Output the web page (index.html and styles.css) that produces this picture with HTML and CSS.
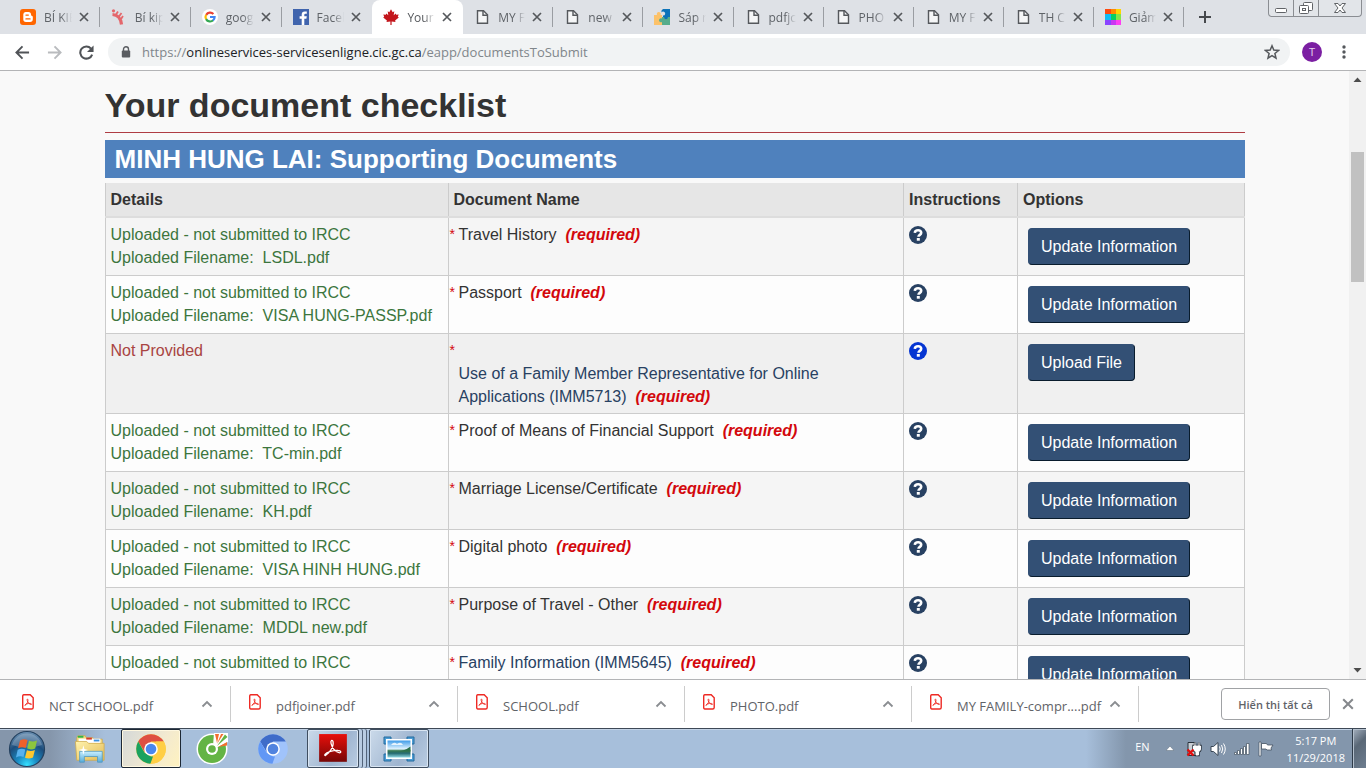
FILE: index.html
```html
<!DOCTYPE html>
<html lang="en">
<head>
<meta charset="utf-8">
<title>Your document checklist</title>
<link rel="stylesheet" href="styles.css">
</head>
<body>
<svg class="symbols" aria-hidden="true">
  <symbol id="doc" viewBox="0 0 16 16"><path d="M3.5 1.8h6l4 4v8.500h-10z" fill="#f5f6f7" stroke="#55585c" stroke-width="1.400"/><path d="M9 2v4.300h4.300" fill="none" stroke="#55585c" stroke-width="1.400"/></symbol>
  <symbol id="cross" viewBox="0 0 10 10"><path d="M1 1l8 8M9 1l-8 8" stroke="currentColor" stroke-width="1.700" fill="none"/></symbol>
  <symbol id="chev" viewBox="0 0 12 8"><path d="M1.500 6.500L6 2l4.500 4.500" stroke="#8a8d91" stroke-width="1.800" fill="none"/></symbol>
  <symbol id="help" viewBox="0 0 18 18"><circle cx="9" cy="9" r="9" fill="currentColor"/><path d="M5.800 6.900C6 4.900 7.300 4.300 9.100 4.300c2 0 3.100 1 3.100 2.400 0 2.100-2.700 2.200-2.700 4.100" fill="none" stroke="#fff" stroke-width="2.600"/><rect x="7.800" y="12" width="3" height="2.700" fill="#fff"/></symbol>
  <symbol id="pdf" viewBox="0 0 12 16"><path d="M1.800.8h6.400l3 3v9.700q0 1.500-1.500 1.500H1.800Q.7 15 .7 13.500v-11Q.7.8 1.800.8z" fill="#fff" stroke="#ee2a24" stroke-width="1.400"/><path d="M3 11.300c2-1 3.500-4.600 2.900-6-.4-.7-1 0-.7 1.200.5 2 2.200 3.700 3.700 4 1.200 0 .6-1.100-1-1.100-1.900 0-4.700.8-5 1.700-.1.500.1.500.1.200z" fill="none" stroke="#ee2a24" stroke-width=".9"/></symbol>
</svg>

<header class="tabstrip">
  <nav class="tabs" aria-label="Tabs">
    <div class="tab">
      <svg class="fav" viewBox="0 0 16 16"><rect width="16" height="16" rx="3" fill="#f60"/><path d="M5.500 3h3Q11 3 11 5.500q0 1.300 1 1.500.8.200.8 1v2.300Q12.800 13 10 13H6q-2.700 0-2.700-2.700V5.500Q3.300 3 5.500 3z" fill="#fff"/><path d="M6 6.100h2.300M6 9.900h4" stroke="#f60" stroke-width="1.400" stroke-linecap="round"/></svg>
      <a class="label" href="#">BÍ KIẾ</a><button class="close" aria-label="Close tab"><svg><use href="#cross"/></svg></button>
    </div>
    <div class="tab">
      <svg class="fav" viewBox="0 0 16 16"><g fill="none" stroke="#e4676c"><path d="M1.500 5.500Q9.500 6 10.500 15.500" stroke-width="3.200"/><path d="M5 5.500L7 2.500M8 7.500l2.500-3.500M10 10l2-3" stroke-width="1.800"/></g><circle cx="2.500" cy="1.800" r="1.600" fill="#e4676c"/></svg>
      <a class="label" href="#">Bí kip</a><button class="close" aria-label="Close tab"><svg><use href="#cross"/></svg></button>
    </div>
    <div class="tab">
      <svg class="fav" viewBox="0 0 16 16"><circle cx="8" cy="8" r="8" fill="#fff"/><g fill="none" stroke-width="2.200"><path d="M4.200 5.800A4.600 4.600 0 0 1 11.400 5" stroke="#ea4335"/><path d="M4.100 10.300a4.600 4.600 0 0 1 0-4.500" stroke="#fbbc05"/><path d="M11.200 11.300a4.600 4.600 0 0 1-7.100-1.200" stroke="#34a853"/><path d="M8 8h4.600a4.600 4.600 0 0 1-1.600 3.500" stroke="#4285f4"/></g></svg>
      <a class="label" href="#">goog</a><button class="close" aria-label="Close tab"><svg><use href="#cross"/></svg></button>
    </div>
    <div class="tab">
      <svg class="fav" viewBox="0 0 16 16"><rect width="16" height="16" fill="#4064ad"/><path d="M8.700 16V9.800H6.600V7.300h2.100V5.400q0-3 3-3h2.100v2.400h-1.500q-1 0-1 1v1.500h2.500l-.4 2.500h-2.100V16z" fill="#fff"/></svg>
      <a class="label" href="#">Faceb</a><button class="close" aria-label="Close tab"><svg><use href="#cross"/></svg></button>
    </div>
    <div class="tab active" aria-current="page">
      <svg class="fav" viewBox="0 0 16 16"><path d="M8 .2l1.700 3 1.600-.9-.6 4 2-1.900.5 1.300 2.500-.3-.9 2.300 1 .8-3.700 3.100.4 1.400-3.900-.5V16h-1.200v-3.500l-3.900.5.4-1.400L.2 8.500l1-.8-.9-2.300 2.500.3.500-1.300 2 1.900-.6-4 1.600.9z" fill="#c3161c"/></svg>
      <a class="label" href="#">Your</a><button class="close" aria-label="Close tab"><svg><use href="#cross"/></svg></button>
    </div>
    <div class="tab"><svg class="fav"><use href="#doc"/></svg><a class="label" href="#">MY F</a><button class="close" aria-label="Close tab"><svg><use href="#cross"/></svg></button></div>
    <div class="tab"><svg class="fav"><use href="#doc"/></svg><a class="label" href="#">new</a><button class="close" aria-label="Close tab"><svg><use href="#cross"/></svg></button></div>
    <div class="tab">
      <svg class="fav" viewBox="0 0 16 16"><path d="M7.500 1.500L9 0h7v8H9V6.500a2 2 0 1 0-1.500-3z" fill="#0c73b9"/><path d="M0 6h3a2 2 0 1 1 3.500 0H8v10H0z" fill="#fcc26a"/><path d="M8 8h8v8H8v-3a2 2 0 1 1 0-3.500z" fill="#56ac8b"/><circle cx="12" cy="8.500" r="1.800" fill="#0c73b9"/></svg>
      <a class="label" href="#">Sáp r</a><button class="close" aria-label="Close tab"><svg><use href="#cross"/></svg></button>
    </div>
    <div class="tab"><svg class="fav"><use href="#doc"/></svg><a class="label" href="#">pdfjc</a><button class="close" aria-label="Close tab"><svg><use href="#cross"/></svg></button></div>
    <div class="tab"><svg class="fav"><use href="#doc"/></svg><a class="label" href="#">PHO</a><button class="close" aria-label="Close tab"><svg><use href="#cross"/></svg></button></div>
    <div class="tab"><svg class="fav"><use href="#doc"/></svg><a class="label" href="#">MY F</a><button class="close" aria-label="Close tab"><svg><use href="#cross"/></svg></button></div>
    <div class="tab"><svg class="fav"><use href="#doc"/></svg><a class="label" href="#">TH C</a><button class="close" aria-label="Close tab"><svg><use href="#cross"/></svg></button></div>
    <div class="tab">
      <svg class="fav" viewBox="0 0 16 16" shape-rendering="crispEdges"><path fill="#ff4a10" d="M0 0h6v5H0z"/><path fill="#ff8a00" d="M6 0h5v5H6z"/><path fill="#ffd500" d="M11 0h5v5h-5z"/><path fill="#11bdf5" d="M0 5h6v6H0z"/><path fill="#08cf62" d="M6 5h5v6H6z"/><path fill="#83e64a" d="M11 5h5v6h-5z"/><path fill="#8a44ff" d="M0 11h6v5H0z"/><path fill="#c837f2" d="M6 11h5v5H6z"/><path fill="#ff3df2" d="M11 11h5v5h-5z"/></svg>
      <a class="label" href="#">Giảm</a><button class="close" aria-label="Close tab"><svg><use href="#cross"/></svg></button>
    </div>
  </nav>
  <div class="strip-end">
    <button class="new-tab" aria-label="New tab"><svg viewBox="0 0 12 12"><path d="M6 0v12M0 6h12" stroke="#46494d" stroke-width="2"/></svg></button>
    <div class="win">
      <button aria-label="Minimize"><svg viewBox="0 0 24 16"><rect x="6.500" y="8.500" width="11" height="4" rx="1" fill="#fff" stroke="#606367"/></svg></button>
      <button aria-label="Restore"><svg viewBox="0 0 24 16"><g fill="#fff" stroke="#606367"><rect x="9.500" y="2.500" width="9" height="8" rx="1"/><rect x="5.500" y="5.500" width="9" height="8" rx="1"/><rect x="8.500" y="8.500" width="3" height="2"/></g></svg></button>
      <button class="win-close" aria-label="Close"><svg viewBox="0 0 42 16"><path d="M15.500 3.500h3.500l2 2.500 2-2.500h3.500l-3.500 4.500 3.500 4.500h-3.500l-2-2.500-2 2.500h-3.500L19 8z" fill="#fff" stroke="#606367"/></svg></button>
    </div>
  </div>
</header>

<div class="toolbar">
  <button class="tool" aria-label="Back"><svg viewBox="0 0 16 16"><path d="M15 8H2M8 1.500L1.500 8 8 14.500" fill="none" stroke="#505357" stroke-width="2"/></svg></button>
  <button class="tool" aria-label="Forward"><svg viewBox="0 0 16 16"><path d="M1 8h13M8 1.500L14.500 8 8 14.500" fill="none" stroke="#b9bbbe" stroke-width="2"/></svg></button>
  <button class="tool" aria-label="Reload"><svg viewBox="0 0 16 16"><path d="M14 10.200A6.500 6.500 0 1 1 12.800 3.800" fill="none" stroke="#505357" stroke-width="2.200"/><path d="M15.500.5v7H8.500z" fill="#505357"/></svg></button>
  <div class="omnibox">
    <svg class="lock" viewBox="0 0 10 12"><path d="M2.500 5V3.300a2.500 2.500 0 0 1 5 0V5" fill="none" stroke="#5a5d61" stroke-width="1.400"/><rect x=".8" y="4.500" width="8.400" height="7" rx="1" fill="#5a5d61"/></svg>
    <a class="url" href="#">https://<b>onlineservices-servicesenligne.cic.gc.ca</b>/eapp/documentsToSubmit</a>
    <button class="star-btn" aria-label="Bookmark"><svg viewBox="0 0 16 16"><path d="M8 1.800l1.800 4.300 4.700.4-3.600 3 1.100 4.600L8 11.600l-4 2.500 1.100-4.600-3.600-3 4.700-.4z" fill="none" stroke="#55585c" stroke-width="1.500"/></svg></button>
  </div>
  <button class="avatar">T</button>
  <button class="menu" aria-label="Menu"><svg viewBox="0 0 4 14"><g fill="#55585c"><circle cx="2" cy="2" r="1.700"/><circle cx="2" cy="7" r="1.700"/><circle cx="2" cy="12" r="1.700"/></g></svg></button>
</div>

<div class="viewport">
  <main class="page">
    <div class="container">
      <h1>Your document checklist</h1>
      <h2>MINH HUNG LAI: Supporting Documents</h2>
      <table>
        <thead><tr><th class="c-details">Details</th><th class="c-name">Document Name</th><th class="c-help">Instructions</th><th>Options</th></tr></thead>
        <tbody>
          <tr><td class="ok">Uploaded - not submitted to IRCC<br>Uploaded Filename:&nbsp; LSDL.pdf</td><td class="name"><div class="doc"><span class="ast">*</span><span class="doc-text">Travel History&nbsp; <strong>(required)</strong></span></div></td><td><a class="help" href="#" aria-label="Instructions"><svg><use href="#help"/></svg></a></td><td class="opt"><button class="btn">Update Information</button></td></tr>
          <tr><td class="ok">Uploaded - not submitted to IRCC<br>Uploaded Filename:&nbsp; VISA HUNG-PASSP.pdf</td><td class="name"><div class="doc"><span class="ast">*</span><span class="doc-text">Passport&nbsp; <strong>(required)</strong></span></div></td><td><a class="help" href="#" aria-label="Instructions"><svg><use href="#help"/></svg></a></td><td class="opt"><button class="btn">Update Information</button></td></tr>
          <tr class="hover"><td class="missing">Not Provided</td><td class="name"><div class="doc below"><span class="ast">*</span><span class="doc-text"><a href="#">Use of a Family Member Representative for Online Applications (IMM5713)</a>&nbsp; <strong>(required)</strong></span></div></td><td><a class="help focus" href="#" aria-label="Instructions"><svg><use href="#help"/></svg></a></td><td class="opt"><button class="btn">Upload File</button></td></tr>
          <tr><td class="ok">Uploaded - not submitted to IRCC<br>Uploaded Filename:&nbsp; TC-min.pdf</td><td class="name"><div class="doc"><span class="ast">*</span><span class="doc-text">Proof of Means of Financial Support&nbsp; <strong>(required)</strong></span></div></td><td><a class="help" href="#" aria-label="Instructions"><svg><use href="#help"/></svg></a></td><td class="opt"><button class="btn">Update Information</button></td></tr>
          <tr><td class="ok">Uploaded - not submitted to IRCC<br>Uploaded Filename:&nbsp; KH.pdf</td><td class="name"><div class="doc"><span class="ast">*</span><span class="doc-text">Marriage License/Certificate&nbsp; <strong>(required)</strong></span></div></td><td><a class="help" href="#" aria-label="Instructions"><svg><use href="#help"/></svg></a></td><td class="opt"><button class="btn">Update Information</button></td></tr>
          <tr><td class="ok">Uploaded - not submitted to IRCC<br>Uploaded Filename:&nbsp; VISA HINH HUNG.pdf</td><td class="name"><div class="doc"><span class="ast">*</span><span class="doc-text">Digital photo&nbsp; <strong>(required)</strong></span></div></td><td><a class="help" href="#" aria-label="Instructions"><svg><use href="#help"/></svg></a></td><td class="opt"><button class="btn">Update Information</button></td></tr>
          <tr><td class="ok">Uploaded - not submitted to IRCC<br>Uploaded Filename:&nbsp; MDDL new.pdf</td><td class="name"><div class="doc"><span class="ast">*</span><span class="doc-text">Purpose of Travel - Other&nbsp; <strong>(required)</strong></span></div></td><td><a class="help" href="#" aria-label="Instructions"><svg><use href="#help"/></svg></a></td><td class="opt"><button class="btn">Update Information</button></td></tr>
          <tr><td class="ok">Uploaded - not submitted to IRCC</td><td class="name"><div class="doc"><span class="ast">*</span><span class="doc-text"><a href="#">Family Information (IMM5645)</a>&nbsp; <strong>(required)</strong></span></div></td><td><a class="help" href="#" aria-label="Instructions"><svg><use href="#help"/></svg></a></td><td class="opt"><button class="btn">Update Information</button></td></tr>
        </tbody>
      </table>
    </div>
  </main>
  <div class="scrollbar">
    <svg class="arrow" viewBox="0 0 17 17"><path d="M4.500 11h8l-4-4.500z" fill="#4c4c4c"/></svg>
    <div class="track"><div class="thumb"></div></div>
    <svg class="arrow" viewBox="0 0 17 17"><path d="M4.500 6h8l-4 4.500z" fill="#4c4c4c"/></svg>
  </div>
</div>

<section class="downloads" aria-label="Downloads">
  <div class="dl"><svg class="pdf"><use href="#pdf"/></svg><a href="#">NCT SCHOOL.pdf</a><button aria-label="Options"><svg><use href="#chev"/></svg></button></div>
  <div class="dl"><svg class="pdf"><use href="#pdf"/></svg><a href="#">pdfjoiner.pdf</a><button aria-label="Options"><svg><use href="#chev"/></svg></button></div>
  <div class="dl"><svg class="pdf"><use href="#pdf"/></svg><a href="#">SCHOOL.pdf</a><button aria-label="Options"><svg><use href="#chev"/></svg></button></div>
  <div class="dl"><svg class="pdf"><use href="#pdf"/></svg><a href="#">PHOTO.pdf</a><button aria-label="Options"><svg><use href="#chev"/></svg></button></div>
  <div class="dl"><svg class="pdf"><use href="#pdf"/></svg><a href="#">MY FAMILY-compr....pdf</a><button aria-label="Options"><svg><use href="#chev"/></svg></button></div>
  <button class="show-all">Hiển thị tất cả</button>
  <button class="dl-close" aria-label="Close"><svg><use href="#cross"/></svg></button>
</section>

<footer class="taskbar">
  <button class="start" aria-label="Start"><svg viewBox="0 0 38 38">
    <defs><radialGradient id="orb" cx=".5" cy=".95" r=".95"><stop offset="0" stop-color="#35e0ff"/><stop offset=".3" stop-color="#1a8cc4"/><stop offset=".65" stop-color="#1c4d7c"/><stop offset="1" stop-color="#6e93b5"/></radialGradient></defs>
    <circle cx="19" cy="19" r="17.500" fill="url(#orb)" stroke="#24415f" stroke-width="1.200"/><path d="M4 15a15.500 15.500 0 0 1 30 0q-15 5-30 0z" fill="#fff" opacity=".22"/>
    <path d="M12 10.500q4-2.200 7.500-.4L17.700 18q-3.700-1.600-7.600.2z" fill="#f0602a"/><path d="M21 10.800q4 1.700 8-.2L27.200 18.400q-4 1.900-8 .2z" fill="#8cc63e"/><path d="M9.700 19.700q4-1.800 7.600-.2L15.500 27q-3.600-1.500-7.500.4z" fill="#56b1ee"/><path d="M18.900 20.200q4 1.700 8-.2L25 27.600q-4 1.900-8 .2z" fill="#fdc72e"/></svg></button>
  <button class="task" aria-label="Explorer"><svg viewBox="0 0 34 34">
    <defs><linearGradient id="fold" x2="1" y2="1"><stop stop-color="#fff3ae"/><stop offset="1" stop-color="#e3bb55"/></linearGradient><linearGradient id="stand" y2="1" x2="0"><stop stop-color="#c8efff"/><stop offset="1" stop-color="#58acd9"/></linearGradient></defs>
    <path d="M3 5l1-2h8l1 2h7l1 1.500h9V26H3z" fill="#f6dc82" stroke="#c8a549" stroke-width=".8"/><path d="M5 6h23v5H5z" fill="#fff"/><path d="M4 3h6v2H4z" fill="#30b54a"/><path d="M13 5h6v2h-6z" fill="#d6392b"/><path d="M21 7h6v2h-6z" fill="#3c92e0"/>
    <path d="M1.500 9h12l2 2H32v18H3z" fill="url(#fold)" stroke="#cdaa4b" stroke-width=".8"/><path d="M6 19.500h24V31h-5v-6H11v6H6z" fill="url(#stand)" stroke="#4a95c0" stroke-width=".8"/><path d="M10 13l1 4 4 1-4 1-1 4-1-4-4-1 4-1z" fill="#fff"/></svg></button>
  <button class="task lit" aria-label="Chrome"><svg viewBox="-16 -16 32 32"><circle r="14.800" fill="#ffce44"/><path d="M-12.800-7.400A14.800 14.800 0 0 1 12.800-7.400H0L-6 3.600z" fill="#de4f43"/><path d="M-12.800-7.400L-6.400 3.700 0 7.400h2L-.6 14.800A14.800 14.800 0 0 1-12.800-7.400z" fill="#1aa260"/><path d="M-.6 14.800L6.400 3.700 5-7.400h7.800A14.800 14.800 0 0 1-.6 14.800z" fill="#ffce44"/><circle r="6.800" fill="#fff"/><circle r="5.300" fill="#4a87ee"/></svg></button>
  <button class="task" aria-label="Cốc Cốc"><svg viewBox="-16 -16 32 32"><circle r="15.500" fill="#fff"/><circle r="14" fill="#64b445"/><path d="M1-3L2-16h14v9L4-1z" fill="#fff"/><path d="M3-15l4 0-2 9zM15-7l0 3.500-9 1.500z" fill="#f36f2f"/><path d="M13-14.500l2.500 2.500L5-3z" fill="#64b445"/><path d="M9-15l2.500 0L5-5z" fill="#f36f2f"/><circle r="6" fill="#fff"/><circle r="3.800" fill="#64b445"/></svg></button>
  <button class="task" aria-label="Chromium"><svg viewBox="-16 -16 32 32"><circle r="14.800" fill="#a0c3fb"/><path d="M-12.800-7.400A14.800 14.800 0 0 1 12.800-7.400H0L-6 3.600z" fill="#3f6cc9"/><path d="M-12.800-7.400L-6.400 3.700 0 7.400h2L-.6 14.800A14.800 14.800 0 0 1-12.800-7.400z" fill="#6197f5"/><circle r="6.800" fill="#fff"/><circle r="5.300" fill="#5083df"/></svg></button>
  <button class="task open stack" aria-label="Adobe Reader"><svg viewBox="0 0 30 30"><defs><linearGradient id="ad" x2="0" y2="1"><stop stop-color="#e80f0b"/><stop offset="1" stop-color="#760606"/></linearGradient></defs><path d="M2 1h26v26H2z" fill="url(#ad)"/><path d="M8 21c4-2 8-9 7-13-.7-2-2.500-1-1.800 2 1 4 4 7.500 7.500 8.500 2.500.5 2-2.200-1-2.200C15.500 16 9 18 7.500 20c-.5 1 0 1.300.5 1z" fill="none" stroke="#fff" stroke-width="1.200"/></svg></button>
  <button class="task open photo" aria-label="Photo viewer"><svg viewBox="0 0 32 28"><defs><linearGradient id="sky" x2="0" y2="1"><stop stop-color="#3e9be8"/><stop offset=".5" stop-color="#e2f4ff"/><stop offset=".6" stop-color="#397a52"/><stop offset=".75" stop-color="#246a70"/><stop offset="1" stop-color="#8fd8e3"/></linearGradient></defs><path d="M1 2h7v7H1zM24 2h7v7h-7zM1 19h7v7H1zM24 19h7v7h-7z" fill="#4c9dd5" stroke="#256a9d"/><path d="M3 4h26v20H3z" fill="#fff"/><path d="M4.500 5.500h23v17h-23z" fill="url(#sky)"/><path d="M8 10q3-4 6-1 4-3 6 1z" fill="#fff" opacity=".8"/><path d="M27.500 11.500v5H13q8 0 14.500-5z" fill="#2b704b"/></svg></button>
  <div class="tray">
    <span class="lang">EN</span>
    <svg class="up" viewBox="0 0 8 5"><path d="M0 4.500h8L4 0z" fill="#fff" stroke="#596878" stroke-width=".5"/></svg>
    <svg class="ti" viewBox="0 0 16 16"><path d="M2 1.500h7v13H2z" fill="#c9ced4" stroke="#28313b"/><path d="M7.500 5h7v3q0 2-2 2.500V14H10v-3.500q-2.500-.5-2.500-2.500zM9 1.500V5M13 1.500V5" fill="#fff" stroke="#28313b" stroke-width="2.400"/><path d="M7.500 5h7v3q0 2-2 2.500V14H10v-3.500q-2.500-.5-2.500-2.500zM9 1.500V5M13 1.500V5" fill="#fff" stroke="#fff"/><path d="M1.500 8.500l6 6M7.500 8.500l-6 6" stroke="#e30d0d" stroke-width="2.400"/></svg>
    <svg class="ti" viewBox="0 0 16 16"><path d="M1 5.500h2.500L8 1.500v13l-4.500-4H1z" fill="#fff" stroke="#394654"/><path d="M9.500 5.500q1.500 2.500 0 5M11.500 4q2.500 4 0 8M13.500 2.500q3.500 5.500 0 11" fill="none" stroke="#fff"/></svg>
    <svg class="ti" viewBox="0 0 16 16"><path d="M.5 11.500h2v2h-2zM3.500 9.500h2v4h-2zM6.500 7.500h2v6h-2zM9.500 5.500h2v8h-2zM12.500 2.500h2.500v11h-2.500z" fill="#fff" stroke="#44515f" stroke-width=".7"/></svg>
    <svg class="ti" viewBox="0 0 16 16"><path d="M1 1h2v14H1z" fill="#fff" stroke="#44515f" stroke-width=".7"/><path d="M3.500 2.500h5l1 1.500H15l-2 3 .500 2H9L8 8H3.500z" fill="#fff" stroke="#44515f" stroke-width=".8"/></svg>
    <time class="clock"><span>5:17 PM</span><span>11/29/2018</span></time>
  </div>
  <button class="desktop" aria-label="Show desktop"></button>
</footer>
</body>
</html>
```
FILE: styles.css
```css
* { box-sizing: border-box; }
html, body { height: 100%; }
body { margin: 0; display: flex; flex-direction: column; overflow: hidden; background: #f9f9f9; color: #333; font-family: "Liberation Sans", Arial, sans-serif; font-size: 16px; line-height: 23px; }
button { margin: 0; padding: 0; border: 0; background: none; font: inherit; color: inherit; display: flex; align-items: center; justify-content: center; flex: none; }
a { color: inherit; text-decoration: none; }
svg { display: block; flex: none; }
.symbols { position: absolute; width: 0; height: 0; }

/* Tab strip */
.tabstrip, .toolbar, .downloads, .taskbar { font-family: "Open Sans", "Noto Sans", sans-serif; flex: none; display: flex; }
.tabstrip { height: 34px; background: #dee1e6; padding-left: 9px; }
.tabs { flex: 1; display: flex; min-width: 0; }
.tab { flex: 90 1 0; min-width: 0; display: flex; align-items: center; padding: 0 11px; position: relative; color: #5f6368; font-size: 12px; }
.tab:nth-child(-n+5) { flex-grow: 91; }
.tab::after { content: ""; position: absolute; right: 0; top: 7px; bottom: 7px; width: 1px; background: #9a9da2; }
.tab.active { background: #fff; border-radius: 8px 8px 0 0; color: #55585c; }
.tab.active::after, .tab:nth-child(4)::after { display: none; }
.fav { width: 16px; height: 16px; margin-right: 8px; }
.label { flex: 1; min-width: 0; overflow: hidden; white-space: nowrap; -webkit-mask-image: linear-gradient(90deg, #000 60%, transparent); mask-image: linear-gradient(90deg, #000 60%, transparent); }
.close { width: 10px; height: 10px; margin-left: 7px; color: #55585c; }
.close svg { width: 10px; height: 10px; }
.strip-end { flex: none; width: 182px; display: flex; justify-content: space-between; padding: 0 4px 0 15px; }
.new-tab { width: 12px; height: 34px; }
.new-tab svg { width: 12px; height: 12px; }
.win { display: flex; height: 17px; border: 1px solid #8a8d92; border-top: 0; border-radius: 0 0 4px 4px; overflow: hidden; background: #e2e5e9; }
.win button { width: 25px; height: 16px; border-right: 1px solid #8a8d92; }
.win svg { width: 24px; height: 16px; }
.win .win-close { width: 42px; border: 0; }
.win .win-close svg { width: 42px; }

/* Toolbar */
.toolbar { height: 37px; background: #fff; border-bottom: 1px solid #b3b4b6; align-items: center; padding: 0 20px 0 14px; }
.tool { width: 16px; height: 28px; margin-right: 16px; }
.tool svg { width: 15px; height: 15px; }
.omnibox { flex: 1; display: flex; align-items: center; height: 28px; margin: 0 12px 0 -2px; padding: 0 10px 0 13px; border-radius: 14px; background: #f1f3f4; }
.lock { width: 10px; height: 12px; margin-right: 11px; }
.url { flex: 1; font-size: 13px; line-height: 20px; color: #80868b; white-space: nowrap; }
.url b { font-weight: 400; color: #202124; }
.star-btn svg { width: 16px; height: 16px; }
.avatar { width: 20px; height: 20px; border-radius: 50%; background: #7b1fa2; color: #e6d2ec; font-size: 11px; line-height: 20px; margin-right: 20px; }
.menu svg { width: 4px; height: 14px; }

/* Page */
.viewport { flex: 1; min-height: 0; display: flex; overflow: hidden; }
.page { flex: 1; min-width: 0; overflow: hidden; }
.container { max-width: 1140px; margin: 0 auto; }
h1 { margin: 0 0 7px; padding: 14px 0 6px; font-size: 34px; line-height: 41px; border-bottom: 1px solid #af3c43; }
h2 { margin: 0 0 5px; padding: 4px 10px; background: #4f81bd; color: #fff; font-size: 26px; line-height: 30px; }
table { width: 100%; table-layout: fixed; border-collapse: collapse; }
.c-details { width: 343px; }
.c-name { width: 40%; }
.c-help { width: 10%; }
th, td { padding: 5px; text-align: left; vertical-align: top; border: 1px solid #ccc; }
th { background: #e6e6e6; border-top: 0; border-bottom: 2px solid #ddd; }
tbody tr { background: #fdfdfd; }
tbody tr:nth-child(odd) { background: #f5f5f5; }
tbody tr.hover { background: #f0f0f0; }
.ok { color: #3c763d; }
.missing { color: #a94442; }
.name { padding: 5px 5px 5px 1px; }
.doc { display: grid; grid-template-columns: 9px 1fr; grid-auto-rows: min-content; }
.ast { color: #d3080c; font-size: 14px; }
.doc-text { grid-column: 2; }
.below .doc-text { grid-row: 2; }
.doc strong { color: #d3080c; font-style: italic; }
.doc a { color: #284162; }
.help { display: flex; align-items: center; height: 23px; color: #284162; }
.help.focus { color: #0535d2; }
.help svg { width: 18px; height: 18px; }
td.opt { padding: 10px; }
.btn { padding: 6px 12px; border: 1px solid #335075; border-right-color: #091c2d; border-bottom-color: #091c2d; border-radius: 4px; background: #335075; color: #fff; }
.scrollbar { flex: none; width: 17px; background: #f1f1f1; display: flex; flex-direction: column; }
.arrow { width: 17px; height: 17px; }
.track { flex: 1; padding: 64px 2px 0; }
.thumb { height: 130px; background: #c1c1c1; }

/* Downloads */
.downloads { height: 49px; background: #fff; border-top: 1px solid #b3b4b6; align-items: center; padding: 0 12px 0 4px; font-size: 13px; color: #5f6368; }
.dl { width: 227px; height: 36px; display: flex; align-items: center; border-right: 1px solid #ccc; padding: 0 17px 0 18px; }
.dl .pdf { width: 12px; height: 16px; margin-right: 15px; margin-bottom: 4px; }
.dl a { flex: 1; white-space: nowrap; padding-top: 4px; }
.dl button svg { width: 12px; height: 8px; }
.show-all { margin-left: auto; height: 32px; width: 109px; border: 1px solid #a0a2a5; border-radius: 4px; font-size: 11px; font-weight: 600; white-space: nowrap; margin-right: 12px; }
.dl-close svg { width: 12px; height: 12px; }
.dl-close { color: #85888c; }

/* Taskbar */
.taskbar { height: 40px; border-top: 1px solid #3e4956; box-shadow: inset 0 1px #c3d3e6; background: linear-gradient(90deg, #8596ab 0, #8596ab 50px, #a7bfdb 105px, #a7bfdb calc(100% - 280px), #8396ac calc(100% - 240px), #8396ac 100%); }
.start { width: 54px; }
.start svg { width: 38px; height: 38px; }
.task { width: 60px; height: 39px; margin-right: 1px; }
.start + .task { margin-left: 6px; }
.task svg { width: 32px; height: 32px; }
.lit { border: 1px solid #1d2835; border-radius: 2px; background: linear-gradient(120deg, #d4d8d8, #f3ead0 60%, #fff2bf); box-shadow: inset 0 0 0 1px #fff8e0; }
.open { border: 1px solid #3f4e60; border-radius: 2px; background: linear-gradient(120deg, #cbdaea, #9fb5d0 60%, #b9cce2); box-shadow: inset 0 0 0 1px #d9e5f2; }
.stack { width: 52px; margin: 0 10px 0 3px; box-shadow: inset 0 0 0 1px #d9e5f2, 3px 0 #b9cce2, 4px 0 #53647a, 7px 0 #b9cce2, 8px 0 #53647a; }
.tray { margin-left: auto; display: flex; align-items: center; gap: 8px; color: #fff; font-size: 12px; padding-right: 7px; }
.lang { margin-right: 8px; padding-bottom: 5px; font-size: 11px; }
.up { width: 8px; height: 5px; margin-right: 4px; }
.ti { width: 16px; height: 16px; }
.clock { display: flex; flex-direction: column; align-items: center; font-size: 11px; line-height: 17px; margin-left: 5px; }
.desktop { width: 14px; height: 39px; border-left: 1px solid #2e3b49; background: linear-gradient(135deg, #a5b1bf, #5a6877 40%, #6d7d8f); box-shadow: inset 1px 1px #b4c0cd; }
```
